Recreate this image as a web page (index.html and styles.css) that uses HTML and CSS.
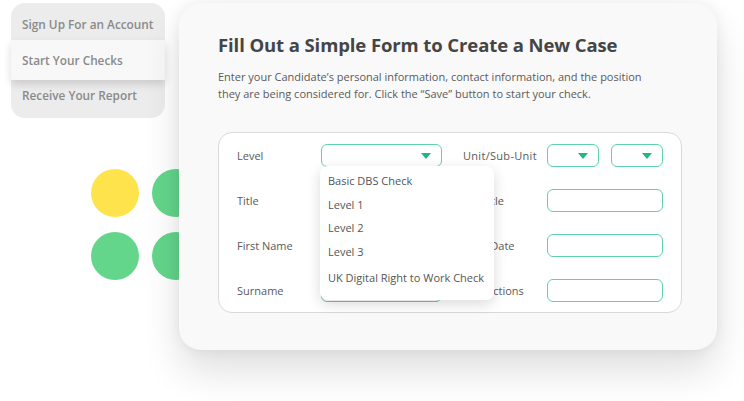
FILE: index.html
```html
<!DOCTYPE html>
<html>
<head>
<meta charset="utf-8">
<link rel="stylesheet" href="styles.css">
</head>
<body>
<div class="stage">
  <div class="side">
    <div class="steps">
      <div class="step step-first">Sign Up For an Account</div>
      <div class="step step-active">Start Your Checks</div>
      <div class="step step-last">Receive Your Report</div>
    </div>
    <div class="dots">
      <span class="dot dot-yellow"></span>
      <span class="dot"></span>
      <span class="dot"></span>
      <span class="dot"></span>
    </div>
  </div>
  <div class="card">
    <h1 class="title">Fill Out a Simple Form to Create a New Case</h1>
    <p class="desc">Enter your Candidate’s personal information, contact information, and the position they are being considered for. Click the “Save” button to start your check.</p>
    <div class="form">
      <div class="label">Level</div>
      <div class="field select"><span class="caret"></span></div>
      <div class="label label-right label-wide">Unit/Sub-Unit</div>
      <div class="pair">
        <div class="field select"><span class="caret"></span></div>
        <div class="field select"><span class="caret"></span></div>
      </div>

      <div class="label">Title</div>
      <div class="field"></div>
      <div class="label label-right">Job Title</div>
      <div class="field"></div>

      <div class="label">First Name</div>
      <div class="field"></div>
      <div class="label label-right">Start Date</div>
      <div class="field"></div>

      <div class="label">Surname</div>
      <div class="field"></div>
      <div class="label label-right">Instructions</div>
      <div class="field"></div>

      <ul class="menu">
        <li>Basic DBS Check</li>
        <li>Level 1</li>
        <li>Level 2</li>
        <li>Level 3</li>
        <li class="menu-last">UK Digital Right to Work Check</li>
      </ul>
    </div>
  </div>
</div>
</body>
</html>
```
FILE: styles.css
```css
* { box-sizing: border-box; }
html, body { margin: 0; padding: 0; background: #ffffff; }
body { font-family: "Open Sans", "Noto Sans", sans-serif; }

.stage {
  width: 744px;
  height: 401px;
  display: flex;
  overflow: hidden;
}

.side {
  width: 179px;
  flex: none;
  padding-top: 3px;
  padding-left: 11px;
  position: relative;
  z-index: 1;
}

.steps {
  width: 154px;
  height: 115px;
  background: #ececec;
  border-radius: 14px;
}
.step {
  font-size: 11.8px;
  font-weight: 600;
  color: #8a8a8a;
  line-height: 14px;
  padding-left: 11px;
  white-space: nowrap;
}
.step-first { padding-top: 14px; padding-bottom: 9px; }
.step-active {
  padding-top: 13px;
  padding-bottom: 13px;
  background: #f8f8f8;
  box-shadow: 0 4px 8px rgba(0,0,0,0.14);
  position: relative;
}
.step-last { padding-top: 8px; padding-bottom: 15px; }

.dots {
  margin-top: 51px;
  margin-left: 80px;
  display: grid;
  grid-template-columns: 48px 48px;
  column-gap: 13px;
  row-gap: 15px;
}
.dot {
  width: 48px;
  height: 48px;
  border-radius: 50%;
  background: #63d68b;
}
.dot-yellow { background: #ffe34d; }

.card {
  position: relative;
  z-index: 2;
  margin-top: 3px;
  width: 538px;
  height: 347px;
  flex: none;
  background: #f9f9f9;
  border-radius: 22px;
  padding: 30px 35px 0 39px;
  box-shadow: 0 22px 38px rgba(0,0,0,0.12), 0 0 14px rgba(0,0,0,0.07);
}

.title {
  margin: 0;
  font-size: 18.5px;
  font-weight: 700;
  color: #454545;
  line-height: 24px;
  letter-spacing: -0.1px;
}
.desc {
  margin: 11px 0 0 0;
  font-size: 11px;
  color: #5a5a5a;
  line-height: 17px;
  width: 440px;
}

.form {
  position: relative;
  margin-top: 30px;
  width: 464px;
  height: 181px;
  background: #ffffff;
  border: 1px solid #d9d9d9;
  border-radius: 14px;
  padding: 11px 0 0 18px;
  display: grid;
  grid-template-columns: 84px 121px 105px 116px;
  grid-auto-rows: 23px;
  row-gap: 22px;
}

.label {
  font-size: 11px;
  color: #5a5a5a;
  line-height: 23px;
  white-space: nowrap;
}
.label-right { padding-left: 21px; }
.label-wide { letter-spacing: 0.3px; }
.field {
  height: 23px;
  border: 1px solid #5fd1ad;
  border-radius: 6px;
  background: #fff;
  position: relative;
}
.pair {
  display: flex;
  gap: 12px;
}
.pair .field { width: 52px; }
.select {
  display: flex;
  justify-content: flex-end;
  align-items: center;
  padding-right: 10px;
}
.caret {
  width: 0;
  height: 0;
  border-left: 5px solid transparent;
  border-right: 5px solid transparent;
  border-top: 6px solid #1fb587;
}

.menu {
  position: absolute;
  left: 101px;
  top: 33px;
  width: 174px;
  height: 134px;
  margin: 0;
  padding: 3px 0 0 0;
  list-style: none;
  background: #ffffff;
  border-radius: 8px;
  box-shadow: 0 4px 14px rgba(0,0,0,0.15);
}
.menu li {
  font-size: 11px;
  color: #555;
  line-height: 23.5px;
  padding-left: 8px;
  white-space: nowrap;
}
.menu .menu-last { margin-top: 3px; }
```
